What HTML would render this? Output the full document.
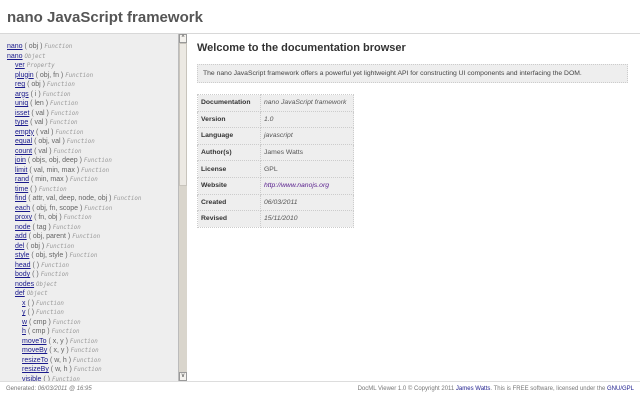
<!DOCTYPE html>
<html><head><style>
body{margin:0;width:640px;height:400px;overflow:hidden;background:#fff;font-family:"Liberation Sans",sans-serif;position:relative}
#hdr{position:absolute;left:0;top:0;width:640px;height:33px;border-bottom:1px solid #d8d8d8;background:#fff}
#hdr h1{margin:0;position:absolute;left:7px;top:9px;font-size:15px;font-weight:bold;color:#555}
#side{position:absolute;left:0;top:34px;width:178px;height:347px;background:#eee;overflow:hidden}
#sb{position:absolute;left:178px;top:34px;width:9px;height:347px;background:#d9d5cc;border-left:1px solid #bbb;box-sizing:border-box}
#sb .th{position:absolute;left:0;top:9px;width:8px;height:143px;background:#ece9e3;border:1px solid #c8c4bc;box-sizing:border-box}
#sb .ar{position:absolute;left:0;width:8px;height:9px;background:#f4f2ee;border:1px solid #999;box-sizing:border-box;font-size:6px;line-height:6px;text-align:center;color:#333}
#side div{position:absolute;font-size:7px;color:#666;white-space:nowrap;line-height:9px}
#side a{color:#1a1a8c;text-decoration:underline}
#side i{color:#999;font-family:"DejaVu Sans Mono",monospace;font-size:5.8px}
h2{position:absolute;left:197px;top:42px;margin:0;font-size:11px;color:#333;font-weight:bold}
#desc{position:absolute;left:197px;top:64px;width:431px;height:19px;background:#eee;border:1px dotted #ccc;box-sizing:border-box;font-size:6.8px;color:#444;padding:5px 0 0 5px}
table{position:absolute;left:197px;top:94px;border-collapse:collapse;font-size:6.8px;color:#555}
td{border:1px dotted #ccc;height:15.6px;padding:0 3px;background:#eee;white-space:nowrap}
td.k{font-weight:bold;color:#333;width:56px}
td.v{font-style:italic;width:86px}
td.v a{color:#551a8b}
#foot{position:absolute;left:0;top:381px;width:640px;height:19px;border-top:1px solid #ddd;font-size:6px;color:#777}
#foot .l{position:absolute;left:6px;top:4px}
#foot .r{position:absolute;right:6px;top:4px}
#foot a{color:#1a1a8c}
</style></head><body>
<div id="hdr"><h1>nano JavaScript framework</h1></div>
<div id="side">
<div style="left:7px;top:8px"><a>nano</a> ( obj ) <i>Function</i></div>
<div style="left:7px;top:17.5px"><a>nano</a> <i>Object</i></div>
<div style="left:15px;top:27px"><a>ver</a> <i>Property</i></div>
<div style="left:15px;top:36.5px"><a>plugin</a> ( obj, fn ) <i>Function</i></div>
<div style="left:15px;top:46px"><a>reg</a> ( obj ) <i>Function</i></div>
<div style="left:15px;top:55.5px"><a>args</a> ( i ) <i>Function</i></div>
<div style="left:15px;top:65px"><a>uniq</a> ( len ) <i>Function</i></div>
<div style="left:15px;top:74.5px"><a>isset</a> ( val ) <i>Function</i></div>
<div style="left:15px;top:84px"><a>type</a> ( val ) <i>Function</i></div>
<div style="left:15px;top:93.5px"><a>empty</a> ( val ) <i>Function</i></div>
<div style="left:15px;top:103px"><a>equal</a> ( obj, val ) <i>Function</i></div>
<div style="left:15px;top:112.5px"><a>count</a> ( val ) <i>Function</i></div>
<div style="left:15px;top:122px"><a>join</a> ( objs, obj, deep ) <i>Function</i></div>
<div style="left:15px;top:131.5px"><a>limit</a> ( val, min, max ) <i>Function</i></div>
<div style="left:15px;top:141px"><a>rand</a> ( min, max ) <i>Function</i></div>
<div style="left:15px;top:150.5px"><a>time</a> ( ) <i>Function</i></div>
<div style="left:15px;top:160px"><a>find</a> ( attr, val, deep, node, obj ) <i>Function</i></div>
<div style="left:15px;top:169.5px"><a>each</a> ( obj, fn, scope ) <i>Function</i></div>
<div style="left:15px;top:179px"><a>proxy</a> ( fn, obj ) <i>Function</i></div>
<div style="left:15px;top:188.5px"><a>node</a> ( tag ) <i>Function</i></div>
<div style="left:15px;top:198px"><a>add</a> ( obj, parent ) <i>Function</i></div>
<div style="left:15px;top:207.5px"><a>del</a> ( obj ) <i>Function</i></div>
<div style="left:15px;top:217px"><a>style</a> ( obj, style ) <i>Function</i></div>
<div style="left:15px;top:226.5px"><a>head</a> ( ) <i>Function</i></div>
<div style="left:15px;top:236px"><a>body</a> ( ) <i>Function</i></div>
<div style="left:15px;top:245.5px"><a>nodes</a> <i>Object</i></div>
<div style="left:15px;top:255px"><a>def</a> <i>Object</i></div>
<div style="left:22px;top:264.5px"><a>x</a> ( ) <i>Function</i></div>
<div style="left:22px;top:274px"><a>y</a> ( ) <i>Function</i></div>
<div style="left:22px;top:283.5px"><a>w</a> ( cmp ) <i>Function</i></div>
<div style="left:22px;top:293px"><a>h</a> ( cmp ) <i>Function</i></div>
<div style="left:22px;top:302.5px"><a>moveTo</a> ( x, y ) <i>Function</i></div>
<div style="left:22px;top:312px"><a>moveBy</a> ( x, y ) <i>Function</i></div>
<div style="left:22px;top:321.5px"><a>resizeTo</a> ( w, h ) <i>Function</i></div>
<div style="left:22px;top:331px"><a>resizeBy</a> ( w, h ) <i>Function</i></div>
<div style="left:22px;top:340.5px"><a>visible</a> ( ) <i>Function</i></div>
</div>
<div id="sb"><div class="ar" style="top:0">^</div><div class="th"></div><div class="ar" style="bottom:0">v</div></div>
<h2>Welcome to the documentation browser</h2>
<div id="desc">The nano JavaScript framework offers a powerful yet lightweight API for constructing UI components and interfacing the DOM.</div>
<table>
<tr><td class="k">Documentation</td><td class="v">nano JavaScript framework</td></tr>
<tr><td class="k">Version</td><td class="v">1.0</td></tr>
<tr><td class="k">Language</td><td class="v">javascript</td></tr>
<tr><td class="k">Author(s)</td><td class="v" style="font-style:normal">James Watts</td></tr>
<tr><td class="k">License</td><td class="v" style="font-style:normal">GPL</td></tr>
<tr><td class="k">Website</td><td class="v"><a>http://www.nanojs.org</a></td></tr>
<tr><td class="k">Created</td><td class="v">06/03/2011</td></tr>
<tr><td class="k">Revised</td><td class="v">15/11/2010</td></tr>
</table>
<div id="foot"><span class="l">Generated: <i>06/03/2011 @ 16:95</i></span><span class="r">DocML Viewer 1.0 © Copyright 2011 <a>James Watts</a>. This is FREE software, licensed under the <a>GNU/GPL</a></span></div>
</body></html>
